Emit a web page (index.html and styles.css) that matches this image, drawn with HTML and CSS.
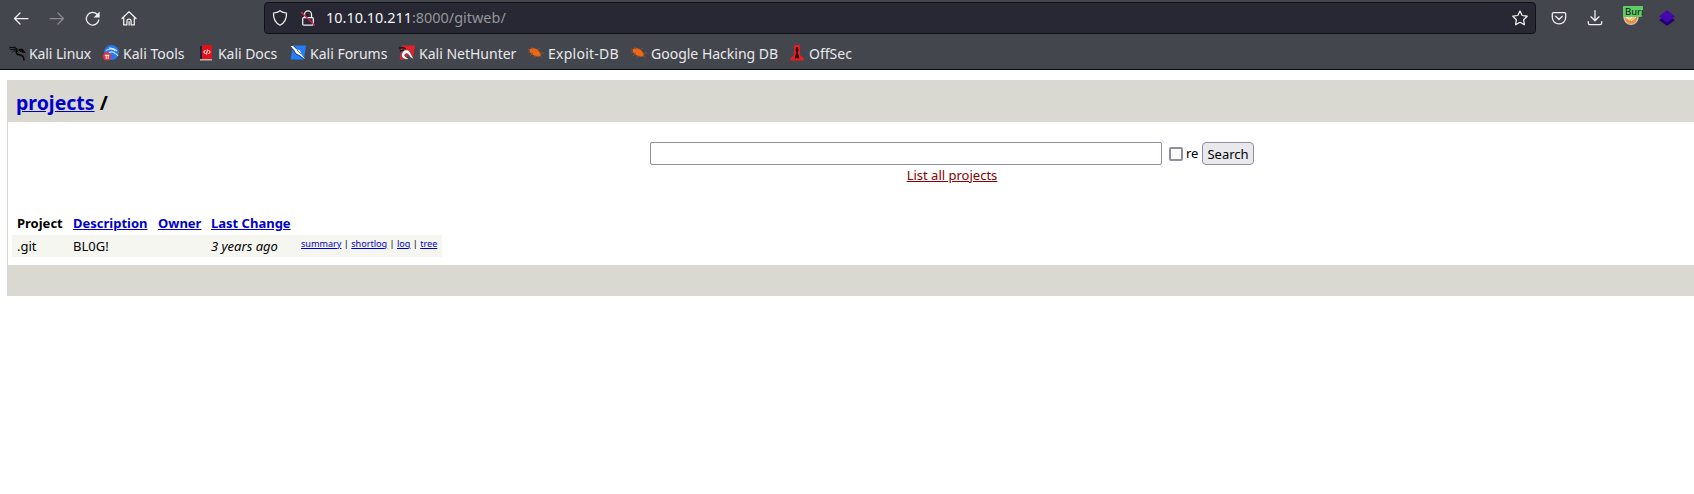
FILE: index.html
```html
<!DOCTYPE html>
<html lang="en">
<head>
<meta charset="utf-8">
<title>10.10.10.211 Git</title>
<link rel="stylesheet" href="styles.css">
</head>
<body>
<header class="browser">
  <div class="toolbar">
    <nav class="nav-buttons">
      <svg class="icon" viewBox="0 0 16 16"><path d="M15 8.500H1.500M7 3 1.500 8.500 7 14"/></svg>
      <svg class="icon dim" viewBox="0 0 16 16"><path d="M1 8.500h13.500M9 3l5.500 5.500L9 14"/></svg>
      <svg class="icon" viewBox="0 0 16 16"><path d="M13.800 10A6.300 6.300 0 1 1 12.300 4.500"/><path class="solid" d="M14.600 1.500v6H8.600z"/></svg>
      <svg class="icon" viewBox="0 0 16 16"><path d="M1 8.500 8 1.800l7 6.700M2.700 7.500v7.300h3.200v-3.500a2.100 2.100 0 0 1 4.200 0v3.500h3.200V7.500M8.100 11.500V15"/></svg>
    </nav>
    <div class="urlbar">
      <svg class="icon" viewBox="0 0 16 16"><path d="M8 .8C6 2.400 3.700 2.900 1.500 3c-.2 5 1 9.500 6.500 12.200C13.500 12.500 14.700 8 14.500 3 12.300 2.900 10 2.400 8 .8z"/></svg>
      <svg class="icon lock" viewBox="0 0 16 16"><path d="M4.500 7.500V4.300a3.500 3.500 0 0 1 7 0v3.200M3.700 7.500h8.600c.7 0 1 .4 1 1v5.500c0 .7-.4 1-1 1H3.700c-.7 0-1-.4-1-1V8.500c0-.7.4-1 1-1z"/><path class="strike" d="m1.500 2.500 13 12.500"/></svg>
      <span class="url"><b>10.10.10.211</b>:8000/gitweb/</span>
      <svg class="icon star" viewBox="0 0 16 16"><path d="m8 1 2.200 4.500 5 .7-3.600 3.500.8 5L8 12.300l-4.400 2.400.8-5L.8 6.200l5-.7z"/></svg>
    </div>
    <div class="extensions">
      <svg class="icon" viewBox="0 0 16 16"><path d="M2.700 2.500h10.600c.8 0 1.400.5 1.400 1.300v3.500c0 8.900-13.400 8.900-13.400 0V3.800c0-.8.600-1.300 1.400-1.300zM4.700 6.300 8 9.500l3.300-3.200"/></svg>
      <svg class="icon" viewBox="0 0 16 16"><path d="M8 .5v10M4 6.800l4 4 4-4M1.300 11.500v1.600c0 1 .6 1.600 1.600 1.600h10.200c1 0 1.600-.6 1.600-1.600v-1.600"/></svg>
      <span class="proxy">
        <svg class="pic" viewBox="0 0 16 16"><circle cx="8" cy="7.500" r="7.600" fill="#c9c7c4"/><circle cx="8" cy="7.500" r="6.300" fill="#ed8d32"/><path d="m2 8 5 3 6-5 1-3H2z" fill="#ffc477"/><path d="m3 7 4 2 4-4M8 11l5-4" stroke="#fff" fill="none"/></svg>
        <span class="badge">Burp</span>
      </span>
      <svg class="pic" viewBox="0 0 16 16"><path d="m0 10 8-5 8 5-8 6z" fill="#22006d"/><path d="m0 6.500 8-6.500 8 6.500-8 6z" fill="#4707b0"/></svg>
    </div>
  </div>
  <nav class="bookmarks">
    <a class="bm linux"><svg class="pic" viewBox="0 0 16 16"><path d="M0 3c3-1 5-.8 8 1M1 5c3-1 5-1 7 0M3 7.500C5 5 8 5 9.500 7.500M5 1.500l5 4 2 0 2 2" stroke="#090909" fill="none"/><path d="M8 5c-2 3 0 4.500 3 5 3 .4 4 2 4 5.500M10 4.500h3l2 2.500-4-1" stroke="#090909" stroke-width="1.500" fill="none"/></svg><span>Kali Linux</span></a>
    <a class="bm tools"><svg class="pic" viewBox="0 0 16 16"><circle cx="8.500" cy="7.500" r="7.400" fill="#2878f2"/><path d="M3 5.500c4-2.500 8-1.500 9 .5M6 8c2-2 5-1 6 .5 1 0 2 1 3 2.500M6 3c4 0 6 1 8 3" stroke="#d7eaff" stroke-width="1.100" fill="none"/><circle cx="4" cy="11.500" r="4" fill="#f02d32"/><path d="M1.800 10.300h4.500M3.200 10v4M5.200 10v4" stroke="#fff" fill="none"/></svg><span>Kali Tools</span></a>
    <a class="bm docs"><svg class="pic" viewBox="0 0 16 16"><path d="M2 1h2v14H2z" fill="#17223f"/><path d="M4 0h10v14H4z" fill="#de1218"/><path d="M2 14h12v1.500H2z" fill="#b7b6b8"/><path d="M7.500 5 5.700 7l1.800 2M10.500 5l1.800 2-1.800 2M9.500 4.500l-1 5" stroke="#fff" fill="none"/></svg><span>Kali Docs</span></a>
    <a class="bm forums"><svg class="pic" viewBox="0 0 16 16"><path d="M3 .5h13l-2 14H.5z" fill="#237df5"/><path d="m0 1 3 0 4 3.500 3 1 1.500 4 3.800 5-5.300-4-4-2-1.500-3z" fill="#fff"/><path d="m0 1 4 5 2 3 4 2 5 4M4 1l3 3.500M7 5l4 4" stroke="#202c3d" stroke-width=".7" fill="none"/></svg><span>Kali Forums</span></a>
    <a class="bm hunter"><svg class="pic" viewBox="0 0 16 16"><path d="M3 .5h13l-2 13-4-4-5 5H.5z" fill="#e5202b"/><path d="M0 3c3 0 4-1 7 1M1 6l4-1" stroke="#17171b" stroke-width="1.500" fill="none"/><path d="M3 8c2-4 6-4 8-1l4 7.500-4-2.500C9 8 7 8 6 9.500c-1 1.500 0 2.500 4 4-4 2.500-9-1-7-5.500z" fill="#fff" stroke="#26242a" stroke-width=".5"/></svg><span>Kali NetHunter</span></a>
    <a class="bm exploit"><svg class="pic" viewBox="0 0 16 16"><path d="M2 4c4-2 9 0 11 6-2 3-7 1-9-1C2 8 1 6 2 4z" fill="#f26511"/><path d="M0 7l5 1-3 3M5 5 4 2M9 5l3-2M11 8l5 0M8 10l-2 3M12 10l2 3M2 5 0 4" stroke="#ad572a" stroke-width=".7" fill="none"/></svg><span>Exploit-DB</span></a>
    <a class="bm hacking"><svg class="pic" viewBox="0 0 16 16"><path d="M2 4c4-2 9 0 11 6-2 3-7 1-9-1C2 8 1 6 2 4z" fill="#f26511"/><path d="M0 7l5 1-3 3M5 5 4 2M9 5l3-2M11 8l5 0M8 10l-2 3M12 10l2 3M2 5 0 4" stroke="#ad572a" stroke-width=".7" fill="none"/></svg><span>Google Hacking DB</span></a>
    <a class="bm offsec"><svg class="pic" viewBox="0 0 16 16"><path d="M5 0h6v10l3.500 3v2.500h-13V13L5 10z" fill="#e71d23"/><path d="M7.200 2h1.600l.7 3-1 3 1.500 3v3l-2-1.500L6 14v-3l1.500-3-1-3z" fill="#27080a"/></svg><span>OffSec</span></a>
  </nav>
</header>
<main class="gitweb">
  <div class="page-header"><a href="#">projects</a> /</div>
  <form class="project-search">
    <div class="search-row">
      <input class="query" type="text" aria-label="Search projects">
      <label class="regex"><input class="check" type="checkbox"><span>re</span></label>
      <button class="submit" type="button">Search</button>
    </div>
    <a class="list-all" href="#">List all projects</a>
  </form>
  <table class="project-list">
    <tr><th class="c1">Project</th><th class="c2"><a href="#">Description</a></th><th class="c3"><a href="#">Owner</a></th><th class="c4"><a href="#">Last Change</a></th><th class="c5"></th></tr>
    <tr class="dark"><td>.git</td><td>BL0G!</td><td></td><td><i>3 years ago</i></td><td class="links"><a href="#">summary</a> | <a href="#">shortlog</a> | <a href="#">log</a> | <a href="#">tree</a></td></tr>
  </table>
  <div class="page-footer"></div>
</main>
</body>
</html>
```
FILE: styles.css
```css
* { box-sizing: border-box; }
body { margin: 0; height: 494px; overflow: hidden; background: #fff; color: #000; font: 13px/17px "Noto Sans", sans-serif; }
.browser { height: 70px; background: #44464e; border-bottom: 1px solid #0c0c0d; color: #e9e9eb; }
.toolbar { display: flex; align-items: center; height: 36px; }
.icon { width: 16px; height: 16px; flex: none; fill: none; stroke: #f2f2f2; stroke-width: 1.25; stroke-linecap: round; stroke-linejoin: round; overflow: visible; }
.icon .solid { fill: #f2f2f2; stroke: none; }
.icon .strike { stroke: #e62055; }
.dim { opacity: .4; }
.pic { width: 16px; height: 16px; flex: none; display: block; overflow: visible; }
.nav-buttons { display: flex; gap: 20px; width: 264px; padding-left: 13px; }
.urlbar { display: flex; align-items: center; width: 1272px; height: 32px; padding: 0 7px; background: #272833; border: 1px solid #101116; border-radius: 4px; }
.lock { margin-left: 12px; }
.url { margin-left: 10px; font-size: 14.45px; line-height: 20px; color: #96969d; }
.url b { font-weight: 400; color: #f5f5f6; }
.star { margin-left: auto; }
.extensions { display: flex; align-items: center; gap: 20px; padding-left: 15px; }
.proxy { position: relative; width: 16px; height: 16px; }
.badge { position: absolute; left: 0; top: -4px; width: 20px; height: 11px; overflow: hidden; background: #5fcc64; color: #111; padding-left: 2px; font-size: 9.5px; line-height: 11px; border-radius: 1px; }
.bookmarks { display: flex; height: 34px; padding-left: 9px; font-size: 14px; line-height: 20px; align-items: center; white-space: nowrap; }
.bm { display: flex; align-items: center; gap: 4px; flex: none; }
.bm span { padding-top: 1px; }
.linux { width: 94px; letter-spacing: -.1px; } .tools { width: 95px; } .docs { width: 92px; letter-spacing: -.05px; } .forums { width: 109px; }
.hunter { width: 129px; } .exploit { width: 103px; letter-spacing: .25px; } .hacking { width: 158px; }
.gitweb { margin: 10px 0 0 7px; border-left: 1px solid #d9d8d1; }
a { color: #0000cc; text-decoration: underline; }
.bm { color: inherit; text-decoration: none; }
.page-header { height: 42px; padding: 10px 8px 0; background: #d9d8d1; font-size: 19.5px; line-height: 26px; font-weight: 700; }
.project-search { display: flex; flex-direction: column; align-items: center; height: 92px; padding: 20px 0 0 202px; }
.search-row { display: flex; align-items: center; height: 23px; }
.query { width: 512px; height: 23px; margin: 0 7px 0 0; border: 1px solid #8f8f9d; border-radius: 2px; }
.regex { display: flex; align-items: center; gap: 3px; width: 33px; }
.check { appearance: none; width: 14px; height: 14px; margin: 0; border: 2px solid #8f8f9d; border-radius: 2px; background: #fff; }
.submit { width: 52px; height: 23px; padding: 0; border: 1px solid #8f8f9d; border-radius: 4px; background: #e9e9ed; color: #000; font: 13px "Noto Sans", sans-serif; }
.list-all { margin-top: 2px; color: #880000; }
.project-list { margin: 0 0 8px 4px; border-collapse: collapse; table-layout: fixed; width: 430px; }
th, td { height: 22px; padding: 0 5px; text-align: left; white-space: nowrap; vertical-align: middle; }
th { height: 21px; padding-bottom: 2px; }
.c1 { width: 56px; } .c2 { width: 85px; } .c3 { width: 53px; } .c4 { width: 90px; } .c5 { width: 146px; }
.dark { background: #f6f6f0; }
.links { font-size: 9.1px; line-height: 12px; padding-bottom: 5px; }
.page-footer { height: 31px; margin-left: -1px; background: #d9d8d1; }
```
